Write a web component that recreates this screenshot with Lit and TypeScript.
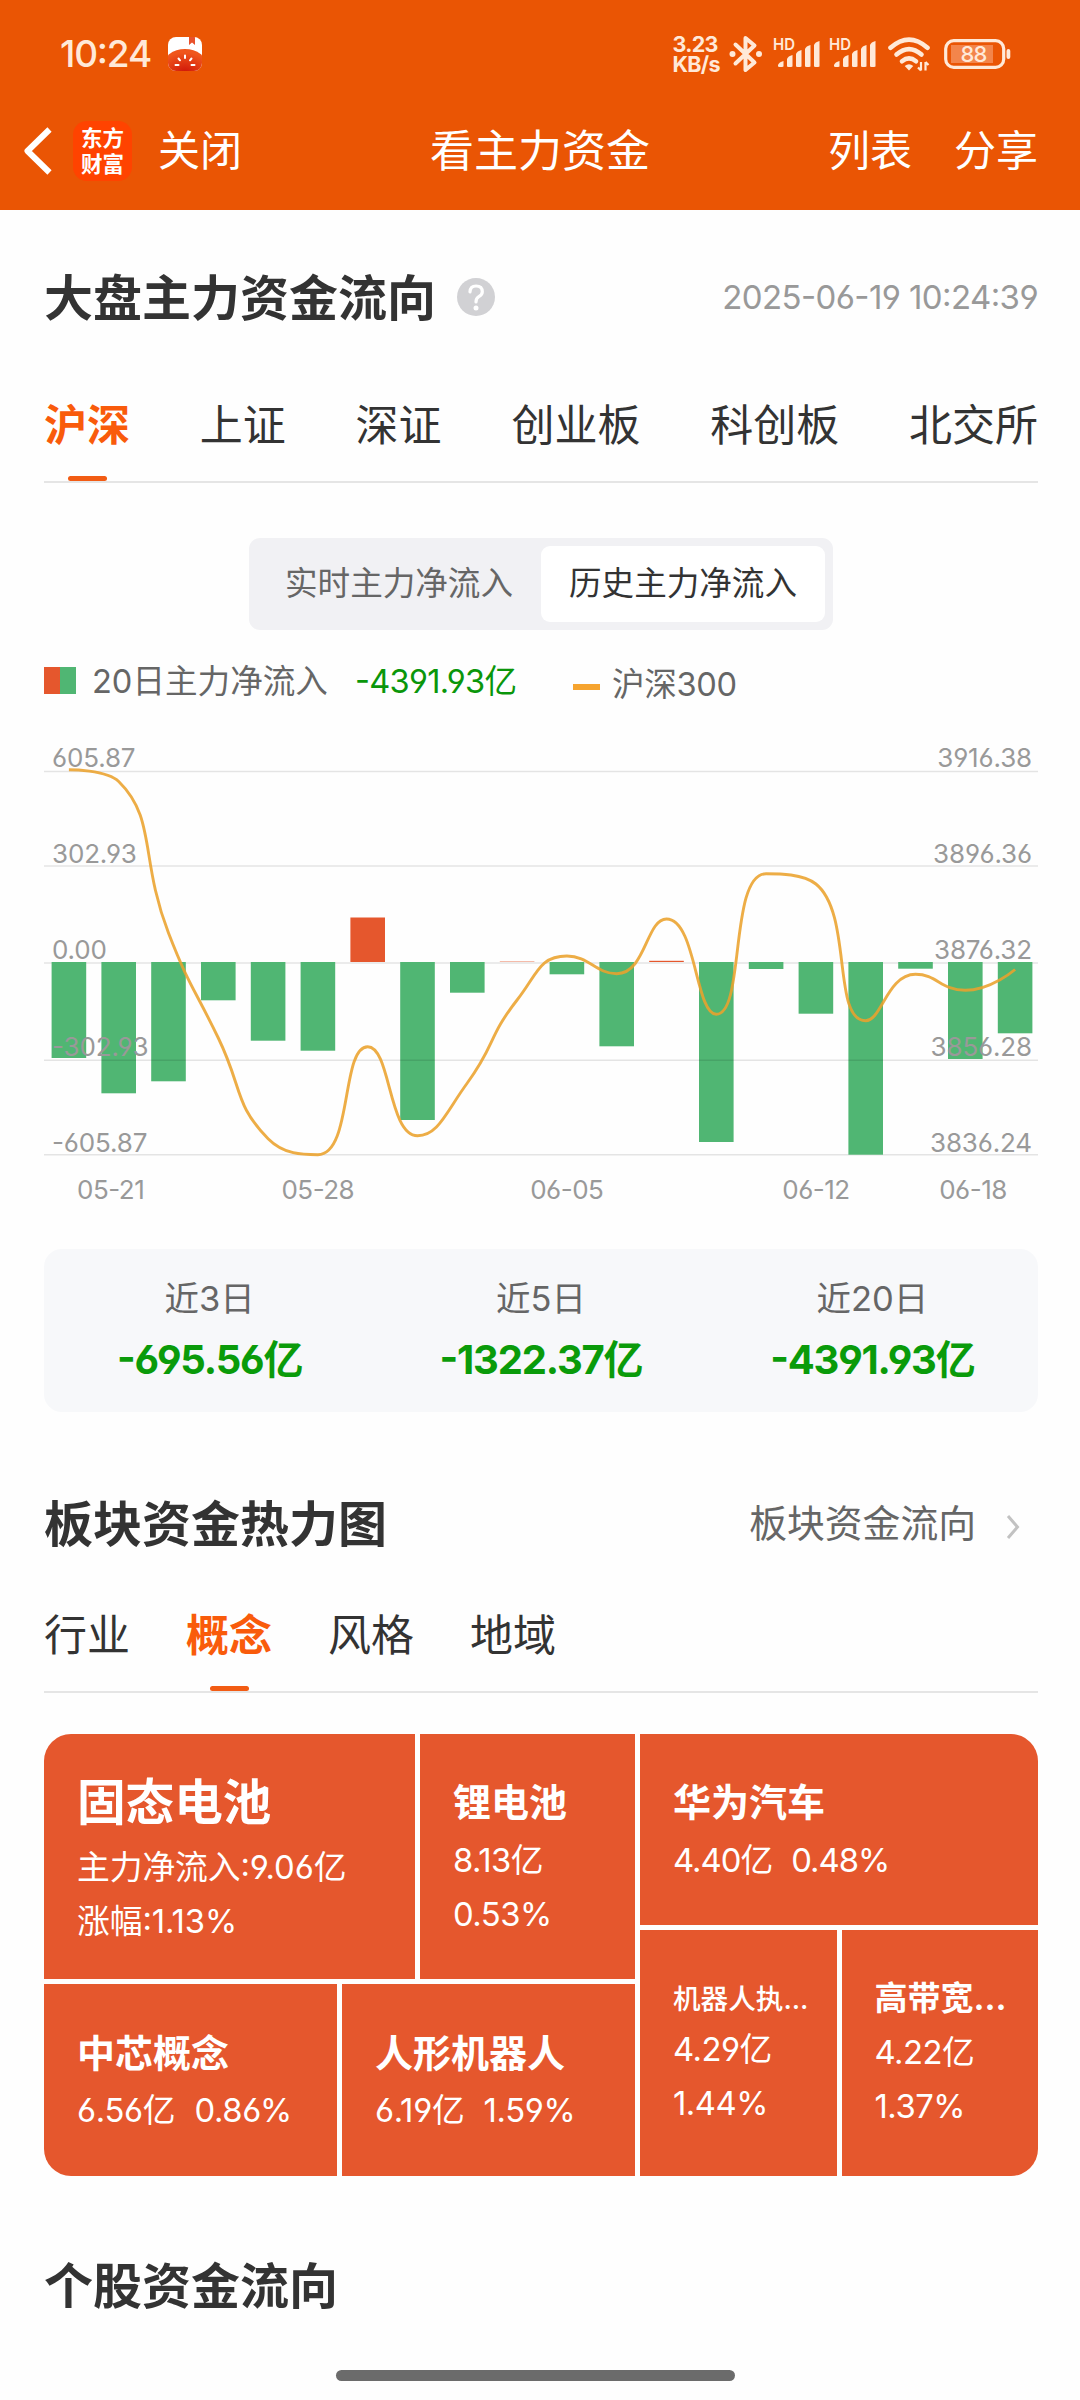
import { LitElement, html, svg, css, nothing } from "lit";
import { customElement, property } from "lit/decorators.js";

const fontStack = css`"Inter", "Noto Sans CJK SC", "Noto Sans", sans-serif`;

/* ---------- status bar ---------- */

@customElement("status-bar")
class StatusBar extends LitElement {
  static styles = css`
    :host { display: block; color: #ffe9d8; }
    .bar { display: flex; align-items: center; height: 108px; padding: 0 69px 0 60px; box-sizing: border-box; }
    .time { font-size: 37px; font-weight: 500; letter-spacing: -1.2px; line-height: 40px; width: 108px; }
    .fill { flex: 1; }
    .speed { display: flex; flex-direction: column; width: 56.5px; font-size: 21.5px; font-weight: 700; line-height: 20px; letter-spacing: -0.7px; }
    svg { display: block; flex: none; }
    .bt { margin-right: 10px; }
    .sig { margin-right: 9px; }
    .wifi { margin: 0 13px 0 2px; }
    .hd { font-size: 16.5px; font-weight: 600; fill: #ffe9d8; }
    .pct { font-size: 22px; font-weight: 500; fill: #ffe9d8; letter-spacing: -0.8px; }
  `;

  private signal() {
    const tops = [22, 16, 11, 6, 2];
    return html`<svg class="sig" width="47" height="38" viewBox="0 0 47 38">
      <text class="hd" x="0" y="15" textLength="22" lengthAdjust="spacingAndGlyphs">HD</text>
      ${tops.map((t, i) => {
        const x = 5 + i * 9;
        const top = t + 4;
        return svg`<path fill="#ffe9d8" d="M${x} 31.5V${top + 4}Q${x + 1} ${top + 1} ${x + 5.5} ${top}V31.5Q${x + 2.7} 32.5 ${x} 31.5Z"/>`;
      })}
    </svg>`;
  }

  render() {
    return html`<div class="bar">
      <span class="time">10:24</span>
      <svg width="34" height="34" viewBox="0 0 34 34">
        <defs>
          <clipPath id="tile"><rect width="34" height="34" rx="8" /></clipPath>
          <radialGradient id="fruit" cx="0.5" cy="0.7" r="0.6">
            <stop offset="0" stop-color="#cf1408" />
            <stop offset="1" stop-color="#f0561c" />
          </radialGradient>
        </defs>
        <g clip-path="url(#tile)">
          <rect width="34" height="34" fill="#fff" />
          <path d="M21 0H27V8L24 5.5L21 8Z" fill="#e8512c" />
          <ellipse cx="17" cy="29" rx="22" ry="17" fill="url(#fruit)" />
          <g stroke="#fff" stroke-width="2" stroke-linecap="round">
            <path d="M17 18.500V21M10.500 21.500L12 23.300M23.500 21.500L22 23.300M7.500 28H10.500M26.500 28H23.500" />
          </g>
        </g>
      </svg>
      <span class="fill"></span>
      <span class="speed"><span>3.23</span><span>KB/s</span></span>
      <svg class="bt" width="34" height="38" viewBox="0 0 34 38">
        <path d="M6.500 9.500L25.500 27.500L16.500 35V3L25.500 10.500L6.500 28.500" fill="none" stroke="#ffe9d8" stroke-width="4" stroke-linejoin="round" stroke-linecap="round" />
        <circle cx="3.500" cy="19" r="3" fill="#ffe9d8" />
        <circle cx="30" cy="19" r="3" fill="#ffe9d8" />
      </svg>
      ${this.signal()}${this.signal()}
      <svg class="wifi" width="44" height="36" viewBox="0 0 44 36">
        <g fill="none" stroke="#ffe9d8" stroke-width="4.600" stroke-linecap="round">
          <path d="M3.500 11.800Q22 -4.500 40.500 11.800" />
          <path d="M9.500 18.600Q22 7.800 34.500 18.600" />
          <path d="M15 25.200Q22 19.600 29 25.200" />
        </g>
        <path d="M22 34.500L17.700 30Q22 26.300 26.300 30Z" fill="#ffe9d8" />
        <path d="M34 26V34.500M34 34.500L31 31.500M38.500 34.500V26M38.500 26L41.500 29" fill="none" stroke="#ffe9d8" stroke-width="2.200" />
      </svg>
      <svg width="67" height="30" viewBox="0 0 67 30">
        <rect x="1.700" y="1.700" width="58" height="26.600" rx="8" fill="none" stroke="#ffe9d8" stroke-width="3.200" />
        <rect x="7" y="6" width="42" height="18" fill="#f3854b" />
        <rect x="62.500" y="10" width="3.800" height="10" rx="1.900" fill="#ffe9d8" />
        <text class="pct" x="29.500" y="23" text-anchor="middle">88</text>
      </svg>
    </div>`;
  }
}

/* ---------- navigation bar ---------- */

@customElement("nav-bar")
class NavBar extends LitElement {
  static styles = css`
    :host { display: block; color: #fff; }
    .bar { display: grid; grid-template-columns: 1fr auto 1fr; align-items: center; height: 102px; padding: 0 42px 16px; box-sizing: border-box; line-height: 60px; }
    .left, .right { display: flex; align-items: center; }
    .right { justify-content: flex-end; gap: 42px; }
    .left { margin-left: -20px; }
    .back { display: block; margin-right: 20px; }
    .logo { display: grid; place-content: center; width: 59px; height: 60px; border-radius: 14px; background: #ff4300; font-size: 21.5px; line-height: 26px; font-weight: 700; text-align: center; margin-right: 26px; }
    .item { font-size: 42px; }
    .title { font-size: 44px; }
  `;
  render() {
    return html`<div class="bar">
      <div class="left">
        <svg class="back" width="31" height="50" viewBox="0 0 31 50">
          <path d="M27.500 3.500L5.500 25L27.500 46.500" fill="none" stroke="#fff" stroke-width="6" stroke-linejoin="round" />
        </svg>
        <span class="logo">东方<br />财富</span>
        <span class="item">关闭</span>
      </div>
      <span class="title">看主力资金</span>
      <div class="right"><span class="item">列表</span><span class="item">分享</span></div>
    </div>`;
  }
}

/* ---------- underlined tabs ---------- */

@customElement("tab-strip")
class TabStrip extends LitElement {
  @property({ attribute: false }) items: string[] = [];
  @property({ type: Number }) active = 0;
  @property({ type: Boolean, reflect: true }) spread = false;

  static styles = css`
    :host { display: block; border-bottom: 2px solid #e5e5e5; }
    .row { display: flex; gap: 56px; height: 92px; }
    :host([spread]) .row { justify-content: space-between; gap: 0; }
    .tab { display: flex; flex-direction: column; align-items: center; justify-content: space-between; font-size: 43px; line-height: 73px; color: #333; white-space: nowrap; }
    .on { color: #f95b0b; font-weight: 700; }
    .mark { width: 39px; height: 5px; border-radius: 3px; background: #f25c14; }
  `;
  render() {
    return html`<div class="row">
      ${this.items.map(
        (t, i) => html`<div class="tab ${i === this.active ? "on" : ""}">
          <span>${t}</span>${i === this.active ? html`<i class="mark"></i>` : nothing}
        </div>`
      )}
    </div>`;
  }
}

/* ---------- history chart ---------- */

const PLOT = { width: 994, zero: 242, band: 49.8, bar: 34.6 };
const GRID = [51.5, 146, 243, 340.2, 434.7];
const LEFT_AXIS = ["605.87", "302.93", "0.00", "-302.93", "-605.87"];
const RIGHT_AXIS = ["3916.38", "3896.36", "3876.32", "3856.28", "3836.24"];
const LABEL_BASE = [47, 143.3, 239.3, 336, 432];
const BARS = [-96, -131.3, -119.3, -38.3, -78.7, -88.7, 44.5, -158, -30.7, 0.4, -12.3, -84.3, 1.2, -180, -7, -51.7, -192.7, -6.7, -97, -71.3];
const INDEX = [49.7, 61.5, 213, 318, 418.7, 434.7, 326.7, 415.7, 363, 280, 236, 253.7, 199, 294.3, 153.7, 164, 300.7, 254.3, 270.3, 249.5];
const DATES: [number, string][] = [
  [66.7, "05-21"],
  [273.8, "05-28"],
  [522.8, "06-05"],
  [772, "06-12"],
  [929, "06-18"],
];

const clamp = (v: number, a: number, b: number) => Math.max(Math.min(v, Math.max(a, b)), Math.min(a, b));

/* Bezier smoothing whose control points never leave the segment's own range. */
function smoothPath(pts: [number, number][], k = 0.5): string {
  let d = `M${pts[0][0]} ${pts[0][1]}`;
  let [c0x, c0y] = pts[0];
  for (let i = 1; i < pts.length; i++) {
    const [px, py] = pts[i - 1];
    const [x, y] = pts[i];
    let c1x = x, c1y = y, nx0 = x, ny0 = y;
    if (i < pts.length - 1) {
      const [nx, ny] = pts[i + 1];
      const prev = Math.hypot(x - px, y - py);
      const next = Math.hypot(nx - x, ny - y);
      const ratio = next / (next + prev);
      nx0 = clamp(x + (nx - px) * k * ratio, nx, x);
      ny0 = clamp(y + (ny - py) * k * ratio, ny, y);
      c1x = clamp(x - ((nx0 - x) * prev) / next, px, x);
      c1y = clamp(y - ((ny0 - y) * prev) / next, py, y);
      nx0 = x + ((x - c1x) * next) / prev;
      ny0 = y + ((y - c1y) * next) / prev;
    }
    d += `C${c0x.toFixed(1)} ${c0y.toFixed(1)} ${c1x.toFixed(1)} ${c1y.toFixed(1)} ${x.toFixed(1)} ${y.toFixed(1)}`;
    c0x = nx0;
    c0y = ny0;
  }
  return d;
}

@customElement("flow-chart")
class FlowChart extends LitElement {
  static styles = css`
    :host { display: block; height: 500px; }
    svg { display: block; overflow: visible; }
    text { font-size: 26px; fill: #999; letter-spacing: -0.15px; }
    .end { text-anchor: end; }
    .mid { text-anchor: middle; letter-spacing: -0.5px; }
    .grid { stroke: rgba(0, 0, 0, 0.1); stroke-width: 1.6; }
    .up { fill: #e5572d; }
    .down { fill: #50b673; }
    .line { fill: none; stroke: #eba22c; stroke-opacity: 0.88; stroke-width: 2.9; stroke-linejoin: bevel; }
  `;
  render() {
    const pts = INDEX.map((y, i) => [PLOT.band * (i + 0.5), y] as [number, number]);
    const rule = (y: number) => svg`<line class="grid" x1="0" x2=${PLOT.width} y1=${y} y2=${y} />`;
    return html`<svg width="994" height="500" viewBox="0 0 994 500">
      ${[0, 1, 2, 4].map((i) => rule(GRID[i]))}
      ${BARS.map((v, i) => svg`<rect class=${v > 0 ? "up" : "down"} x=${PLOT.band * (i + 0.5) - PLOT.bar / 2}
        y=${v > 0 ? PLOT.zero - v : PLOT.zero} width=${PLOT.bar} height=${Math.abs(v)} />`)}
      ${rule(GRID[3])}
      ${LEFT_AXIS.map((t, i) => svg`<text x="8" y=${LABEL_BASE[i]}>${t}</text>`)}
      ${RIGHT_AXIS.map((t, i) => svg`<text class="end" x="988" y=${LABEL_BASE[i]}>${t}</text>`)}
      <path class="line" d=${smoothPath(pts)} />
      ${DATES.map(([x, t]) => svg`<text class="mid" x=${x} y="479">${t}</text>`)}
    </svg>`;
  }
}

/* ---------- sector heat map ---------- */

interface Tile { area: string; name: string; lines: string[]; }
const TILES: Tile[] = [
  { area: "a", name: "固态电池", lines: ["主力净流入:9.06亿", "涨幅:1.13%"] },
  { area: "b", name: "锂电池", lines: ["8.13亿", "0.53%"] },
  { area: "c", name: "华为汽车", lines: ["4.40亿|0.48%"] },
  { area: "d", name: "中芯概念", lines: ["6.56亿|0.86%"] },
  { area: "e", name: "人形机器人", lines: ["6.19亿|1.59%"] },
  { area: "f", name: "机器人执...", lines: ["4.29亿", "1.44%"] },
  { area: "g", name: "高带宽...", lines: ["4.22亿", "1.37%"] },
];

@customElement("heat-map")
class HeatMap extends LitElement {
  static styles = css`
    :host { display: block; }
    .map { display: flex; gap: 5px; height: 442px; border-radius: 27px; overflow: hidden; }
    .col { display: flex; flex-direction: column; gap: 5px; }
    .col.l { width: 591px; }
    .col.r { flex: 1; }
    .row { display: flex; gap: 5px; }
    .l .row:first-child { height: 245px; }
    .r .row:first-child { height: 191px; }
    .row:last-child { flex: 1; }
    .tile { flex: 1; box-sizing: border-box; background: #e5572d; color: #fff; padding: 37px 0 0 33px; white-space: nowrap; }
    .a { flex: 0 0 371px; padding-top: 31px; }
    .f { padding-top: 46px; }
    .g { padding-top: 42px; }
    .name { font-size: 38px; line-height: 62px; font-weight: 700; }
    .a .name { font-size: 48.6px; line-height: 75px; }
    .d .name, .e .name { line-height: 60px; }
    .d, .e { padding-top: 39px; }
    .f .name { font-size: 27.6px; line-height: 46px; font-weight: 500; }
    .g .name { font-size: 33px; line-height: 53px; font-weight: 700; }
    .line { display: flex; gap: 19px; font-size: 32.8px; line-height: 54px; letter-spacing: -0.3px; }
    .a .line { letter-spacing: -0.1px; }
    .c .line { letter-spacing: -1px; }
    .b .line, .f .line, .g .line { letter-spacing: -0.5px; }
  `;
  private tile(id: string) {
    const t = TILES.find((x) => x.area === id)!;
    return html`<div class="tile ${t.area}">
      <div class="name">${t.name}</div>
      ${t.lines.map((l) => html`<div class="line">${l.split("|").map((s) => html`<span>${s}</span>`)}</div>`)}
    </div>`;
  }
  render() {
    return html`<div class="map">
      <div class="col l">
        <div class="row">${this.tile("a")}${this.tile("b")}</div>
        <div class="row">${this.tile("d")}${this.tile("e")}</div>
      </div>
      <div class="col r">
        <div class="row">${this.tile("c")}</div>
        <div class="row">${this.tile("f")}${this.tile("g")}</div>
      </div>
    </div>`;
  }
}

/* ---------- page ---------- */

@customElement("app-root")
class AppRoot extends LitElement {
  static styles = css`
    :host { display: block; width: 1080px; height: 2400px; overflow: hidden; background: #fefefe; color: #333; font-family: ${fontStack}; font-feature-settings: "case", "cv03", "cv04"; }
    .top { height: 210px; background: #ea5504; }
    .page { display: flex; flex-direction: column; height: 2190px; padding: 0 42px 19px 44px; box-sizing: border-box; }
    .head { display: flex; align-items: center; height: 80px; }
    .head.first { margin-top: 47px; }
    h2 { margin: 0; padding-top: 3px; font-size: 49px; line-height: 80px; font-weight: 700; }
    .help { display: block; margin-left: 20px; }
    .date { margin-left: auto; font-size: 33px; color: #999; letter-spacing: -0.6px; }
    .tabs1 { margin-top: 52px; }
    .seg { display: flex; align-self: center; margin-top: 55px; width: 584px; height: 92px; box-sizing: border-box; padding: 8px; border-radius: 11px; background: #f1f1f4; font-size: 32.6px; line-height: 74px; color: #666; }
    .opt { flex: 1; text-align: center; }
    .opt.on { background: #fff; color: #333; border-radius: 9px; }
    .legend { display: flex; align-items: center; height: 60px; margin-top: 21px; font-size: 32.6px; line-height: 60px; color: #666; white-space: nowrap; }
    .legend > * { flex: none; }
    .swatch { width: 32px; height: 27px; background: linear-gradient(90deg, #e5572d 50%, #50b673 50%); margin: 0 16px 1px 0; }
    .sum { color: #0a960a; margin-left: 27px; letter-spacing: -0.7px; width: 162px; }
    .dash { width: 27px; height: 6px; background: #f6a42f; margin: 12px 12px 0 56px; }
    .ix { margin-top: 6px; letter-spacing: -0.3px; }
    .chart { margin-top: 9px; }
    .totals { display: grid; grid-template-columns: repeat(3, 1fr); margin-top: 29px; height: 163px; box-sizing: border-box; padding-top: 20px; border-radius: 18px; background: #f7f8fa; text-align: center; }
    .span { font-size: 34.5px; line-height: 60px; color: #666; }
    .amt { font-size: 40px; line-height: 61px; font-weight: 700; color: #0a9b0a; letter-spacing: -1.2px; }
    .head.second { margin-top: 71px; }
    .more { display: flex; align-items: center; margin: -5px 17px 0 auto; font-size: 37.8px; color: #666; }
    .chev { display: block; margin: 13px 0 0 29px; }
    .tabs2 { margin-top: 36px; }
    .map { margin-top: 41px; }
    .head.third { margin-top: 69px; }
    .home { width: 399px; height: 11px; border-radius: 6px; background: #6b6b6b; margin: auto 0 0 292px; }
  `;
  render() {
    const totals = [
      ["近3日", "-695.56亿"],
      ["近5日", "-1322.37亿"],
      ["近20日", "-4391.93亿"],
    ];
    return html`
      <header class="top"><status-bar></status-bar><nav-bar></nav-bar></header>
      <main class="page">
        <div class="head first">
          <h2>大盘主力资金流向</h2>
          <svg class="help" width="40" height="40" viewBox="0 0 40 40">
            <circle cx="20" cy="20" r="19" fill="#d1d1d4" />
            <path d="M14 14.800Q14.300 9 20 9Q26.300 9 26.300 14.800Q26.300 17.800 22.800 19.700Q20 21.300 20 25" fill="none" stroke="#fff" stroke-width="3.200" stroke-linecap="round" />
            <circle cx="20" cy="31" r="2.500" fill="#fff" />
          </svg>
          <span class="date">2025-06-19 10:24:39</span>
        </div>
        <tab-strip class="tabs1" spread .items=${["沪深", "上证", "深证", "创业板", "科创板", "北交所"]} .active=${0}></tab-strip>
        <div class="seg"><span class="opt">实时主力净流入</span><span class="opt on">历史主力净流入</span></div>
        <div class="legend">
          <i class="swatch"></i><span>20日主力净流入</span><span class="sum">-4391.93亿</span>
          <i class="dash"></i><span class="ix">沪深300</span>
        </div>
        <flow-chart class="chart"></flow-chart>
        <section class="totals">
          ${totals.map(([a, b]) => html`<div><div class="span">${a}</div><div class="amt">${b}</div></div>`)}
        </section>
        <div class="head second">
          <h2>板块资金热力图</h2>
          <span class="more">板块资金流向
            <svg class="chev" width="16" height="26" viewBox="0 0 16 26"><path d="M3 2L12.500 13L3 24" fill="none" stroke="#c2c2c2" stroke-width="3" /></svg>
          </span>
        </div>
        <tab-strip class="tabs2" .items=${["行业", "概念", "风格", "地域"]} .active=${1}></tab-strip>
        <heat-map class="map"></heat-map>
        <div class="head third"><h2>个股资金流向</h2></div>
        <i class="home"></i>
      </main>
    `;
  }
}
